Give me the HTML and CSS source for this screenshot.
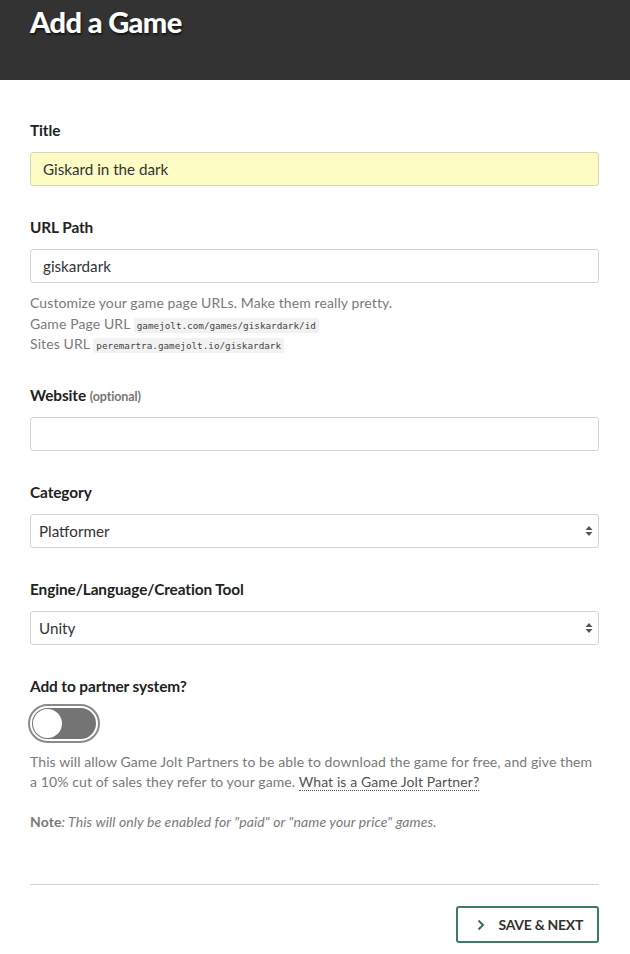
FILE: index.html
```html
<!DOCTYPE html>
<html>
<head>
<meta charset="utf-8">
<link rel="stylesheet" href="styles.css">
</head>
<body>
<header class="header">
  <h1 class="page-title">Add a Game</h1>
</header>
<main class="form">
  <div class="group">
    <label class="label">Title</label>
    <div class="input input-filled">Giskard in the dark</div>
  </div>
  <div class="group group-url">
    <label class="label">URL Path</label>
    <div class="input">giskardark</div>
    <div class="help">
      <div>Customize your game page URLs. Make them really pretty.</div>
      <div>Game Page URL <code class="code">gamejolt.com/games/giskardark/id</code></div>
      <div>Sites URL <code class="code">peremartra.gamejolt.io/giskardark</code></div>
    </div>
  </div>
  <div class="group">
    <label class="label">Website <span class="optional">(optional)</span></label>
    <div class="input"></div>
  </div>
  <div class="group">
    <label class="label">Category</label>
    <div class="input select">Platformer<span class="arrows"><svg width="8" height="12" viewBox="0 0 8 12"><path d="M4 1L7.5 5H0.5Z" fill="#555"/><path d="M4 11L7.5 7H0.5Z" fill="#555"/></svg></span></div>
  </div>
  <div class="group">
    <label class="label">Engine/Language/Creation Tool</label>
    <div class="input select">Unity<span class="arrows"><svg width="8" height="12" viewBox="0 0 8 12"><path d="M4 1L7.5 5H0.5Z" fill="#555"/><path d="M4 11L7.5 7H0.5Z" fill="#555"/></svg></span></div>
  </div>
  <div class="group group-partner">
    <label class="label">Add to partner system?</label>
    <div class="toggle"><div class="toggle-inner"><div class="knob"></div></div></div>
    <p class="help partner-text">This will allow Game Jolt Partners to be able to download the game for free, and give them a 10% cut of sales they refer to your game. <a class="link">What is a Game Jolt Partner?</a></p>
    <p class="help note"><strong class="note-strong">Note</strong>: This will only be enabled for "paid" or "name your price" games.</p>
  </div>
  <hr class="rule">
  <div class="actions">
    <button class="btn"><svg class="chev" width="8" height="12" viewBox="0 0 8 12"><path d="M1.5 1.5L6 6L1.5 10.5" fill="none" stroke="#3d6b5e" stroke-width="2"/></svg>SAVE &amp; NEXT</button>
  </div>
</main>
</body>
</html>
```
FILE: styles.css
```css
* { box-sizing: border-box; }
html, body { margin: 0; padding: 0; background: #fff; }
body { font-family: Lato, "Noto Sans", sans-serif; color: #333; width: 630px; }
.header { background: #333; height: 80px; padding: 3px 30px 0; }
.page-title { margin: 0; font-family: Lato, sans-serif; font-weight: 900; font-size: 29px; line-height: 38px; color: #fff; letter-spacing: -0.6px; text-shadow: 1px 2px 2px rgba(0,0,0,0.6); }
.form { padding: 41px 31px 0 30px; }
.group { display: flex; flex-direction: column; margin-bottom: 32px; }
.group-url { margin-bottom: 31px; }
.label { font-weight: 700; font-size: 15.4px; line-height: 18px; height: 18px; color: #222; margin-bottom: 13px; letter-spacing: -0.1px; }
.optional { font-size: 12.5px; line-height: 0; color: #777; font-weight: 700; }
.input { height: 34px; border: 1px solid #d4d4d4; border-radius: 3px; padding: 0 12px; display: flex; align-items: center; font-size: 15.2px; color: #333; background: #fff; }
.input-filled { background: #fcfcc4; border-color: #d6d6b0; }
.select { padding-left: 8px; position: relative; justify-content: space-between; }
.arrows { display: flex; align-items: center; margin-right: -7px; }
.help { font-family: Lato, sans-serif; font-size: 14px; line-height: 20.5px; color: #7a7a7a; margin-top: 10px; letter-spacing: 0.1px; }
.help > div { height: 20.5px; }
.code { font-family: "DejaVu Sans Mono", monospace; font-size: 9.3px; line-height: 1; letter-spacing: 0; background: #f2f2f2; color: #444; padding: 2px 3px; border-radius: 2px; }
.group-partner { margin-bottom: 52px; }
.group-partner .label { margin-bottom: 9px; }
.toggle { width: 72px; height: 39px; border: 2px solid #8a8a8a; border-radius: 20px; padding: 2px; margin-left: -2px; }
.toggle-inner { width: 100%; height: 100%; background: #747474; border-radius: 16px; padding: 1px; display: flex; align-items: center; }
.knob { width: 29px; height: 29px; border-radius: 50%; background: #fff; }
.partner-text { margin: 9px 0 0; }
.link { color: #555; text-decoration: none; border-bottom: 1px dotted #555; }
.note { margin: 19px 0 0; font-style: italic; }
.note-strong { font-weight: 700; font-style: normal; }
.rule { border: 0; border-top: 1px solid #d4d4d4; margin: 0; }
.actions { display: flex; justify-content: flex-end; padding-top: 21px; }
.btn { display: flex; align-items: center; gap: 14px; height: 37px; padding: 0 14px 0 19px; border: 2px solid #3d7a68; border-radius: 3px; background: #fff; font-family: Lato, sans-serif; font-weight: 700; font-size: 14px; color: #333; letter-spacing: -0.3px; margin-right: 0; }
.chev { display: block; }
```
